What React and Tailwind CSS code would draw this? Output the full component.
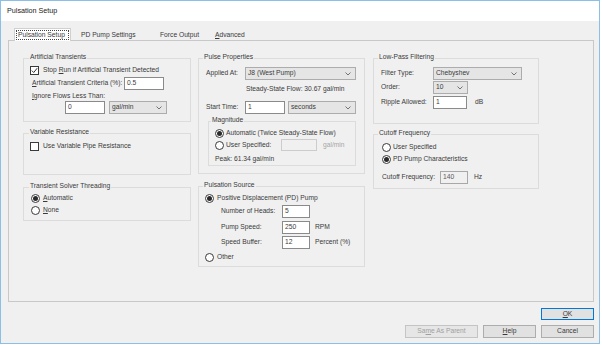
import React from 'react';

const Check = ({ checked }) => (
  <span className="w-[9px] h-[9px] border border-[#3a3a3a] bg-white flex items-center justify-center shrink-0">
    {checked && (
      <svg width="7" height="7" viewBox="0 0 7 7">
        <path d="M0.8 3.6 L2.7 5.5 L6.2 1.2" fill="none" stroke="#333" strokeWidth="1" />
      </svg>
    )}
  </span>
);

const Radio = ({ checked }) => (
  <span className="w-[9px] h-[9px] rounded-full border border-[#3a3a3a] bg-white flex items-center justify-center shrink-0">
    {checked && <span className="w-[5px] h-[5px] rounded-full bg-[#2a2a2a]" />}
  </span>
);

const Input = ({ value = '', className = '', variant = 'normal' }) => {
  const look =
    variant === 'disabled'
      ? 'border-[#cccccc] bg-[#f0f0f0]'
      : variant === 'readonly'
      ? 'border-[#a8a8a8] bg-[#f0f0f0] text-[#5a5a5a]'
      : 'border-[#8a8a8a] bg-white';
  return <div className={`h-[13px] border px-[2px] flex items-center shrink-0 ${look} ${className}`}>{value}</div>;
};

const Select = ({ value, className = '' }) => (
  <div className={`h-[13px] border border-[#acacac] bg-[#e5e5e5] pl-[2px] pr-[4px] flex items-center justify-between shrink-0 ${className}`}>
    <span>{value}</span>
    <svg width="6" height="4" viewBox="0 0 6 4">
      <path d="M0.5 0.5 L3 3 L5.5 0.5" fill="none" stroke="#555" strokeWidth="0.8" />
    </svg>
  </div>
);

const Group = ({ label, labelClass = 'ml-[4px]', className = '', children }) => (
  <div className={`border border-[#dcdcdc] shrink-0 ${className}`}>
    <div className={`-mt-[7px] w-fit bg-[#f0f0f0] px-px h-[9px] leading-[9px] ${labelClass}`}>{label}</div>
    {children}
  </div>
);

const Row = ({ className = '', children }) => (
  <div className={`flex items-center whitespace-nowrap ${className}`}>{children}</div>
);

const Button = ({ children, className = '', disabled }) => (
  <div
    className={`border flex items-center justify-center ${
      disabled ? 'bg-[#e6e6e6] border-[#c4c4c4] text-[#a0a0a0]' : 'bg-[#e1e1e1] border-[#adadad]'
    } ${className}`}
  >
    {children}
  </div>
);

export default function App() {
  return (
    <div className="w-[602px] h-[345px] bg-white font-['Liberation_Sans',Arial,sans-serif] text-[6.7px] text-[#3a3a3a] leading-none">
      <div className="w-[600px] h-[344px] border border-[#8cbfe8] flex flex-col bg-[#f0f0f0]">
        <div className="h-[20px] bg-white flex items-center pl-[6px] text-[7.2px] text-[#1a1a1a] shrink-0">Pulsation Setup</div>

        <div className="pl-[7px] flex flex-col">
          <div className="mt-[7px] h-[12px] flex items-start">
            <div className="relative z-10 ml-[6px] w-[57px] h-[13px] border border-b-0 border-[#d0d0d0] bg-white pt-px pl-px">
              <div className="w-[53px] h-[10px] border border-dotted border-[#444444] flex items-center pl-px">Pulsation Setup</div>
            </div>
            <div className="w-[89px] h-[12px] pl-[10px] flex items-center pt-[2px]">PD Pump Settings</div>
            <div className="w-[55px] h-[12px] flex items-center pt-[2px]">Force Output</div>
            <div className="h-[12px] flex items-center pt-[2px]">
              <span><u>A</u>dvanced</span>
            </div>
          </div>

          <div className="w-[586px] h-[262px] border border-[#c8c8c8] pt-[17px] pl-[14px] flex items-start">
            {/* left column */}
            <div className="w-[168px] flex flex-col">
              <Group label="Artificial Transients" labelClass="ml-[5px]" className="h-[64px]">
                <Row className="mt-[4px] h-[10px] pl-[6px] gap-[4px]">
                  <Check checked />
                  <span>Stop <u>R</u>un if Artificial Transient Detected</span>
                </Row>
                <Row className="mt-[2px] h-[13px] pl-[8px]">
                  <span className="w-[92px]"><u>A</u>rtificial Transient Criteria (%):</span>
                  <Input value="0.5" className="w-[40px]" />
                </Row>
                <Row className="mt-[1px] h-[10px] pl-[8px]">
                  <span><u>I</u>gnore Flows Less Than:</span>
                </Row>
                <Row className="h-[13px] pl-[41px] gap-[4px]">
                  <Input value="0" className="w-[40px]" />
                  <Select value="gal/min" className="w-[58px]" />
                </Row>
              </Group>

              <Group label="Variable Resistance" labelClass="ml-[5px]" className="mt-[11px] h-[42px]">
                <Row className="mt-[5px] h-[10px] pl-[6px] gap-[4px]">
                  <Check />
                  <span>Use Variable Pipe Resistance</span>
                </Row>
              </Group>

              <Group label="Transient Solver Threading" labelClass="ml-[5px]" className="mt-[12px] h-[34px]">
                <Row className="mt-[3px] h-[10px] pl-[7px] gap-[3px]">
                  <Radio checked />
                  <span><u>A</u>utomatic</span>
                </Row>
                <Row className="mt-[2px] h-[10px] pl-[7px] gap-[3px]">
                  <Radio />
                  <span><u>N</u>one</span>
                </Row>
              </Group>
            </div>

            {/* middle column */}
            <div className="ml-[7px] w-[167px] flex flex-col">
              <Group label="Pulse Properties" className="h-[116px]">
                <Row className="mt-[6px] h-[13px] pl-[7px]">
                  <span className="w-[39px]">Applied At:</span>
                  <Select value="J8 (West Pump)" className="w-[111px]" />
                </Row>
                <Row className="mt-[4px] h-[10px] pl-[47px]">
                  <span>Steady-State Flow: 30.67 gal/min</span>
                </Row>
                <Row className="mt-[7px] h-[13px] pl-[7px] gap-[3px]">
                  <span className="w-[36px]">Start Time:</span>
                  <Input value="1" className="w-[40px]" />
                  <Select value="seconds" className="w-[68px]" />
                </Row>
                <Group label="Magnitude" labelClass="ml-[2px]" className="mt-[7px] ml-[9px] w-[148px] h-[45px]">
                  <Row className="mt-[4px] h-[10px] pl-[6px] gap-[2px]">
                    <Radio checked />
                    <span>Automatic (Twice Steady-State Flow)</span>
                  </Row>
                  <Row className="mt-[1px] h-[12px] pl-[6px] gap-[2px]">
                    <Radio />
                    <span className="w-[53px]">User Specified:</span>
                    <Input variant="disabled" className="w-[36px] !h-[12px]" />
                    <span className="ml-[4px] text-[#a6a6a6]">gal/min</span>
                  </Row>
                  <Row className="mt-[3px] h-[10px] pl-[6px]">
                    <span>Peak: 61.34 gal/min</span>
                  </Row>
                </Group>
              </Group>

              <Group label="Pulsation Source" className="mt-[12px] h-[81px]">
                <Row className="mt-[4px] h-[10px] pl-[6px] gap-[3px]">
                  <Radio checked />
                  <span>Positive Displacement (PD) Pump</span>
                </Row>
                <Row className="mt-[2px] h-[13px] pl-[22px]">
                  <span className="w-[61px]">Number of Heads:</span>
                  <Input value="5" className="w-[28px]" />
                </Row>
                <Row className="mt-[3px] h-[13px] pl-[22px]">
                  <span className="w-[61px]">Pump Speed:</span>
                  <Input value="250" className="w-[28px]" />
                  <span className="ml-[5px]">RPM</span>
                </Row>
                <Row className="mt-[2px] h-[13px] pl-[22px]">
                  <span className="w-[61px]">Speed Buffer:</span>
                  <Input value="12" className="w-[28px]" />
                  <span className="ml-[5px]">Percent (%)</span>
                </Row>
                <Row className="mt-[3px] h-[10px] pl-[6px] gap-[3px]">
                  <Radio />
                  <span>Other</span>
                </Row>
              </Group>
            </div>

            {/* right column */}
            <div className="ml-[8px] w-[166px] flex flex-col">
              <Group label="Low-Pass Filtering" className="h-[66px]">
                <Row className="mt-[6px] h-[13px] pl-[7px]">
                  <span className="w-[52px]">Filter Type:</span>
                  <Select value="Chebyshev" className="w-[89px]" />
                </Row>
                <Row className="mt-[1px] h-[13px] pl-[7px]">
                  <span className="w-[52px]">Order:</span>
                  <Select value="10" className="w-[35px]" />
                </Row>
                <Row className="mt-[2px] h-[13px] pl-[7px]">
                  <span className="w-[52px]">Ripple Allowed:</span>
                  <Input value="1" className="w-[34px]" />
                  <span className="ml-[8px]">dB</span>
                </Row>
              </Group>

              <Group label="Cutoff Frequency" className="mt-[10px] h-[55px]">
                <Row className="mt-[5px] h-[10px] pl-[8px] gap-[2px]">
                  <Radio />
                  <span>User Specified</span>
                </Row>
                <Row className="mt-[2px] h-[10px] pl-[8px] gap-[2px]">
                  <Radio checked />
                  <span>PD Pump Characteristics</span>
                </Row>
                <Row className="mt-[7px] h-[13px] pl-[8px]">
                  <span className="w-[58px]">Cutoff Frequency:</span>
                  <Input value="140" variant="readonly" className="w-[28px]" />
                  <span className="ml-[6px]">Hz</span>
                </Row>
              </Group>
            </div>
          </div>

          <div className="mt-[6px] w-[586px] flex justify-end">
            <Button className="w-[53px] h-[12px] !border-[#0078d7]">
              <span><u>O</u>K</span>
            </Button>
          </div>
          <div className="mt-[5px] w-[586px] flex justify-end gap-[5px]">
            <Button disabled className="w-[73px] h-[13px]">
              <span>Sa<u>m</u>e As Parent</span>
            </Button>
            <Button className="w-[53px] h-[13px]">
              <span><u>H</u>elp</span>
            </Button>
            <Button className="w-[53px] h-[13px]">Cancel</Button>
          </div>
        </div>
      </div>
    </div>
  );
}
